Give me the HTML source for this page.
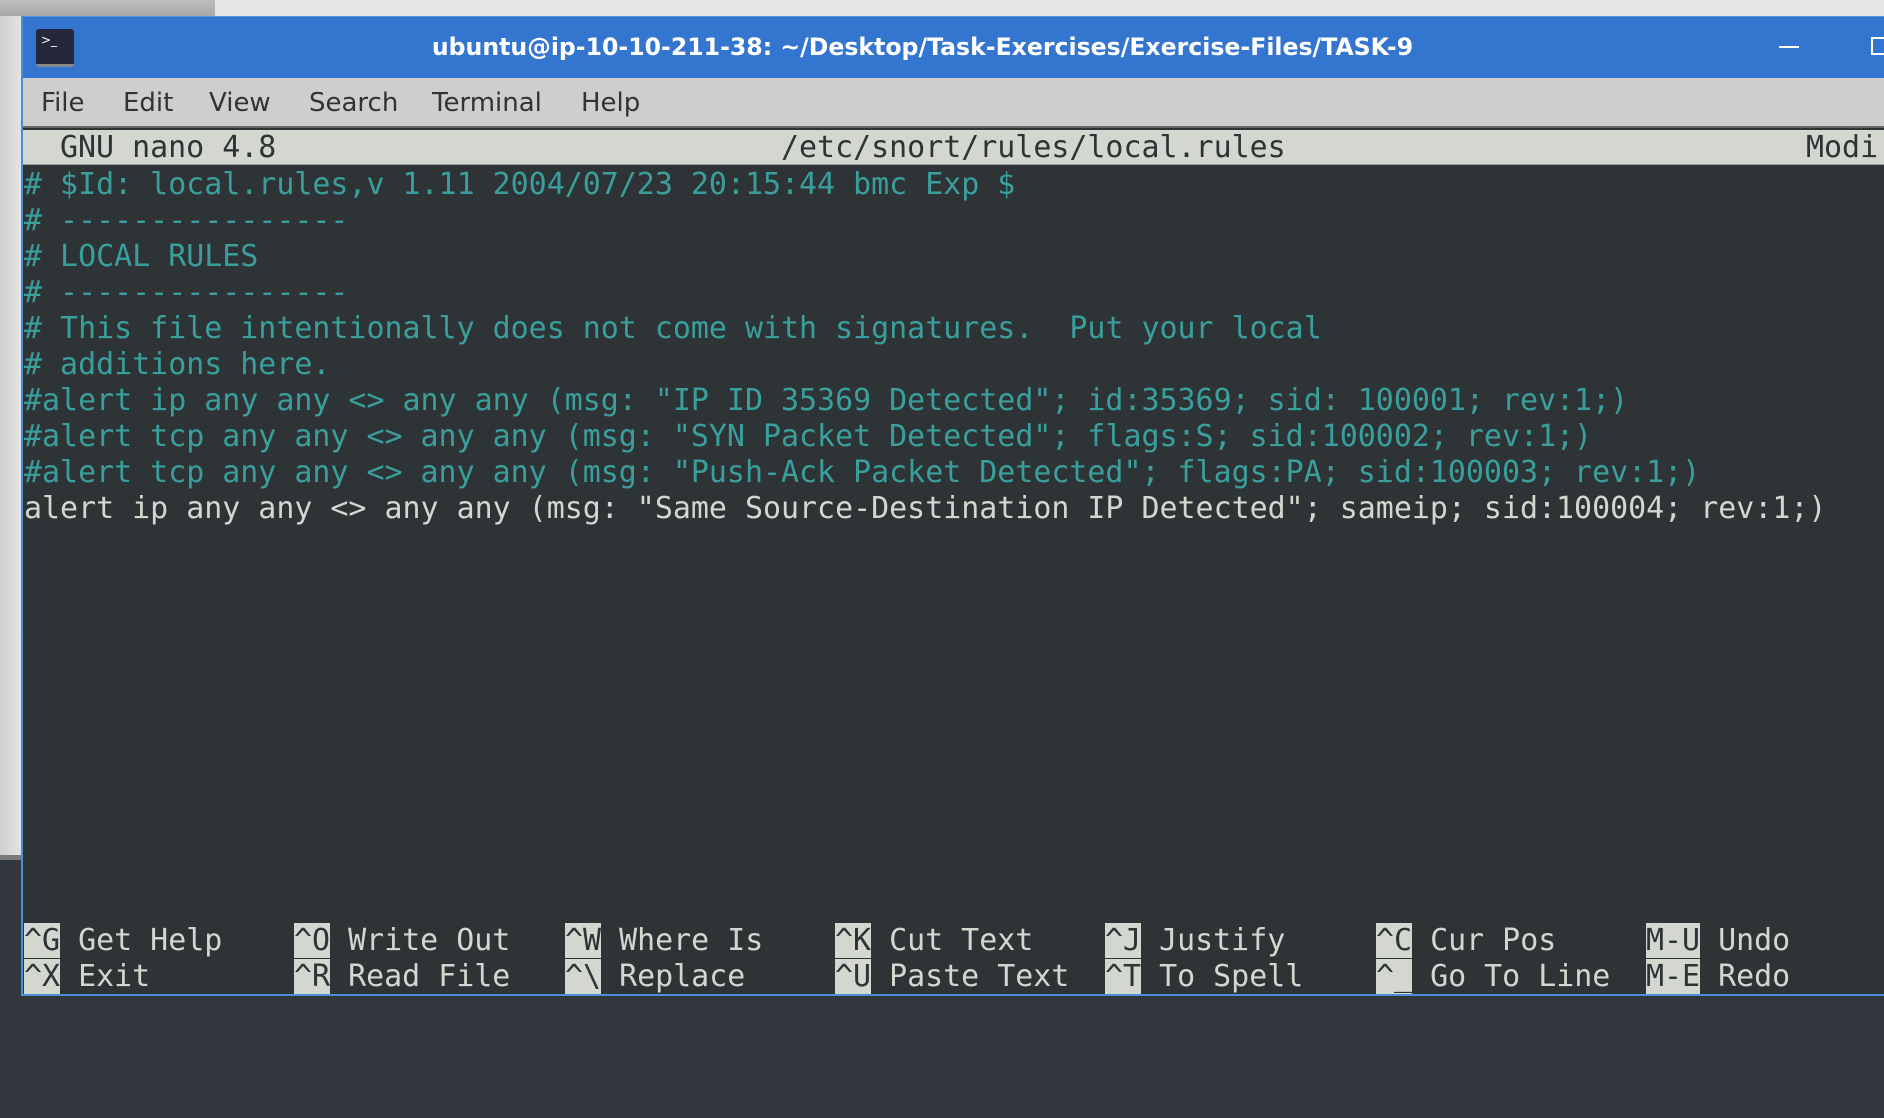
<!DOCTYPE html>
<html><head><meta charset="utf-8"><style>
*{margin:0;padding:0;box-sizing:border-box}
body{width:1884px;height:1118px;overflow:hidden;background:#32363d;position:relative;font-family:"DejaVu Sans Mono","Liberation Mono",monospace}
.abs{position:absolute}
.mono{font-family:"DejaVu Sans Mono","Liberation Mono",monospace;font-size:29.95px;line-height:36px}
.mono div,.mono span{white-space:pre}
.t{color:#3a9f9c}
.w{color:#d3d7cf}
.key{background:#d3d7cf;color:#2e3436}
</style></head><body>
<div class="abs" style="left:0;top:0;width:1884px;height:16px;background:#e6e6e6"></div>
<div class="abs" style="left:0;top:0;width:215px;height:16px;background:linear-gradient(#bdbdbd,#a9a9a9)"></div>
<div class="abs" style="left:0;top:16px;width:22px;height:844px;background:linear-gradient(90deg,#cfcfcf,#e4e4e4)"></div>
<div class="abs" style="left:0;top:855px;width:22px;height:5px;background:#7a7a7a"></div>
<div class="abs" style="left:21px;top:16px;width:1863px;height:980px;background:#2e3436;border-left:2px solid #4a8fd6;border-bottom:2px solid #4a8fd6"></div>
<div class="abs" style="left:23px;top:16px;width:1861px;height:62px;background:#3375cf;border-top:1px solid #5a95e0"></div>
<div class="abs" style="left:36px;top:29px;width:38px;height:38px;background:#24283a;border-radius:3px;border-bottom:3px solid #888"></div>
<div class="abs" style="left:41px;top:33px;color:#fff;font-size:12px;font-family:'DejaVu Sans',sans-serif">&gt;_</div>
<div class="abs" style="left:23px;width:1861px;top:33px;text-align:center;color:#fff;font-family:'DejaVu Sans','Liberation Sans',sans-serif;font-weight:bold;font-size:23.6px"><span style="position:relative;left:-31px">ubuntu@ip-10-10-211-38: ~/Desktop/Task-Exercises/Exercise-Files/TASK-9</span></div>
<div class="abs" style="left:1779px;top:46px;width:20px;height:2px;background:#fff"></div>
<div class="abs" style="left:1871px;top:37px;width:16px;height:18px;border:2px solid #fff"></div>
<div class="abs" style="left:23px;top:78px;width:1861px;height:50px;background:#cecece;border-bottom:2px solid #666"></div>
<div class="abs" style="left:41px;top:88px;font-family:'DejaVu Sans','Liberation Sans',sans-serif;font-size:26px;color:#333">
<span style="position:absolute;left:0">File</span><span style="position:absolute;left:82px">Edit</span><span style="position:absolute;left:168px">View</span><span style="position:absolute;left:268px">Search</span><span style="position:absolute;left:391px">Terminal</span><span style="position:absolute;left:540px">Help</span></div>
<div class="abs" style="left:23px;top:130px;width:1861px;height:35px;background:#d3d7cf;border-bottom:1px solid #999"></div>
<div class="abs mono" style="left:60px;top:130px;color:#2e3436;white-space:pre">GNU nano 4.8</div>
<div class="abs mono" style="left:781px;top:130px;color:#2e3436;white-space:pre">/etc/snort/rules/local.rules</div>
<div class="abs mono" style="left:1806px;top:130px;color:#2e3436;white-space:pre">Modi</div>
<div class="abs mono" style="left:24px;top:167px"><div class="t"># $Id: local.rules,v 1.11 2004/07/23 20:15:44 bmc Exp $</div><div class="t"># ----------------</div><div class="t"># LOCAL RULES</div><div class="t"># ----------------</div><div class="t"># This file intentionally does not come with signatures.  Put your local</div><div class="t"># additions here.</div><div class="t">#alert ip any any &lt;&gt; any any (msg: "IP ID 35369 Detected"; id:35369; sid: 100001; rev:1;)</div><div class="t">#alert tcp any any &lt;&gt; any any (msg: "SYN Packet Detected"; flags:S; sid:100002; rev:1;)</div><div class="t">#alert tcp any any &lt;&gt; any any (msg: "Push-Ack Packet Detected"; flags:PA; sid:100003; rev:1;)</div><div class="w">alert ip any any &lt;&gt; any any (msg: "Same Source-Destination IP Detected"; sameip; sid:100004; rev:1;)</div></div>
<div class="abs mono w" style="left:24px;top:923px;width:1860px;height:36px"><span class="abs" style="left:0"><span class="key">^G</span> Get Help</span><span class="abs" style="left:270px"><span class="key">^O</span> Write Out</span><span class="abs" style="left:541px"><span class="key">^W</span> Where Is</span><span class="abs" style="left:811px"><span class="key">^K</span> Cut Text</span><span class="abs" style="left:1081px"><span class="key">^J</span> Justify</span><span class="abs" style="left:1352px"><span class="key">^C</span> Cur Pos</span><span class="abs" style="left:1622px"><span class="key">M-U</span> Undo</span></div>
<div class="abs mono w" style="left:24px;top:959px;width:1860px;height:36px"><span class="abs" style="left:0"><span class="key">^X</span> Exit</span><span class="abs" style="left:270px"><span class="key">^R</span> Read File</span><span class="abs" style="left:541px"><span class="key">^\</span> Replace</span><span class="abs" style="left:811px"><span class="key">^U</span> Paste Text</span><span class="abs" style="left:1081px"><span class="key">^T</span> To Spell</span><span class="abs" style="left:1352px"><span class="key">^_</span> Go To Line</span><span class="abs" style="left:1622px"><span class="key">M-E</span> Redo</span></div>
</body></html>
